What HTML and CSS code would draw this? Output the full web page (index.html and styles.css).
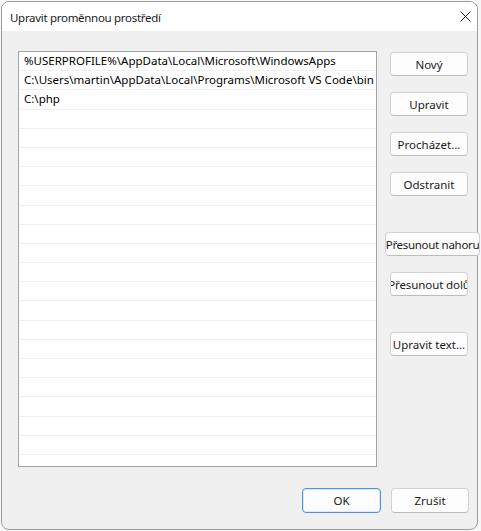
FILE: index.html
```html
<!DOCTYPE html>
<html lang="cs">
<head>
    <meta charset="UTF-8">
    <meta name="viewport" content="width=device-width, initial-scale=1.0">
    <title>Upravit proměnnou prostředí</title>
    <link rel="stylesheet" href="styles.css">
</head>
<body>
    <div class="window">
        <div class="titlebar">
            <span class="title">Upravit proměnnou prostředí</span>
            <svg class="close" width="11" height="11" viewBox="0 0 11 11">
                <path d="M0.5 0.5 L10.5 10.5 M10.5 0.5 L0.5 10.5" stroke="#1f1f1f" stroke-width="1" fill="none"/>
            </svg>
        </div>

        <div class="content">
            <div class="path-list">
                <div class="row">%USERPROFILE%\AppData\Local\Microsoft\WindowsApps</div>
                <div class="row">C:\Users\martin\AppData\Local\Programs\Microsoft VS Code\bin</div>
                <div class="row">C:\php</div>
                <div class="row"></div>
                <div class="row"></div>
                <div class="row"></div>
                <div class="row"></div>
                <div class="row"></div>
                <div class="row"></div>
                <div class="row"></div>
                <div class="row"></div>
                <div class="row"></div>
                <div class="row"></div>
                <div class="row"></div>
                <div class="row"></div>
                <div class="row"></div>
                <div class="row"></div>
                <div class="row"></div>
                <div class="row"></div>
                <div class="row"></div>
                <div class="row"></div>
            </div>

            <div class="actions">
                <button class="btn">Nový</button>
                <button class="btn">Upravit</button>
                <button class="btn">Procházet...</button>
                <button class="btn">Odstranit</button>
                <button class="btn btn-wide group-start">Přesunout nahoru</button>
                <button class="btn btn-tight">Přesunout dolů</button>
                <button class="btn group-start">Upravit text...</button>
            </div>
        </div>

        <div class="footer">
            <button class="btn btn-default">OK</button>
            <button class="btn">Zrušit</button>
        </div>
    </div>
</body>
</html>
```

FILE: styles.css
```css
body {
    margin: 0;
    padding: 1px 0 0 1px;
    background-color: #f7f7f7;
    font-family: "Noto Sans", "Open Sans", sans-serif;
    font-size: 11.5px;
    color: #1a1a1a;
}

/* Okno dialogu */
.window {
    box-sizing: border-box;
    width: 477px;
    height: 529px;
    border: 1px solid #9c9c9c;
    border-radius: 8px;
    background-color: #f0f0f0;
    display: flex;
    flex-direction: column;
}

.titlebar {
    height: 29px;
    display: flex;
    align-items: center;
    justify-content: space-between;
    padding: 0 6px 0 8px;
    background-color: #ffffff;
    border-radius: 7px 7px 0 0;
}

.title {
    color: #1a1a1a;
    font-size: 11.5px;
    letter-spacing: -0.3px;
    padding-top: 1px;
}

.close {
    display: block;
}

.content {
    display: flex;
    align-items: flex-start;
    gap: 13px;
    padding: 20px 0 0 16px;
}

/* Seznam cest */
.path-list {
    box-sizing: border-box;
    flex-shrink: 0;
    width: 359px;
    height: 416px;
    border: 1px solid #a3a3a3;
    background-color: #ffffff;
    overflow: hidden;
}

.row {
    box-sizing: border-box;
    height: 19.2px;
    padding-left: 5px;
    border-bottom: 1px solid #f0f0f0;
    line-height: 18px;
    white-space: nowrap;
    color: #000;
}

.actions {
    flex-shrink: 0;
    width: 78px;
    display: flex;
    flex-direction: column;
    align-items: flex-start;
    gap: 16px;
    padding-top: 1px;
}

.btn {
    box-sizing: border-box;
    flex-shrink: 0;
    width: 78px;
    height: 24px;
    padding: 0;
    display: flex;
    align-items: center;
    justify-content: center;
    overflow: hidden;
    white-space: nowrap;
    font-family: inherit;
    font-size: 11.5px;
    color: #1a1a1a;
    background-color: #fdfdfd;
    border: 1px solid #d3d3d3;
    border-bottom-color: #bcbcbc;
    border-radius: 4px;
}

.btn.group-start {
    margin-top: 20px;
}

/* tlacitka s textem delsim nez sirka */
.btn-wide {
    width: 95px;
    margin-left: -5px;
    letter-spacing: -0.3px;
}

.btn-tight {
    letter-spacing: -0.1px;
}

.footer {
    display: flex;
    justify-content: flex-end;
    gap: 10px;
    padding: 21px 8px 0 0;
}

.footer .btn {
    height: 25px;
}

.btn-default {
    width: 79px;
    border-color: #4a94dc;
    box-shadow: inset 0 0 0 1px #dcebf9;
}
```
